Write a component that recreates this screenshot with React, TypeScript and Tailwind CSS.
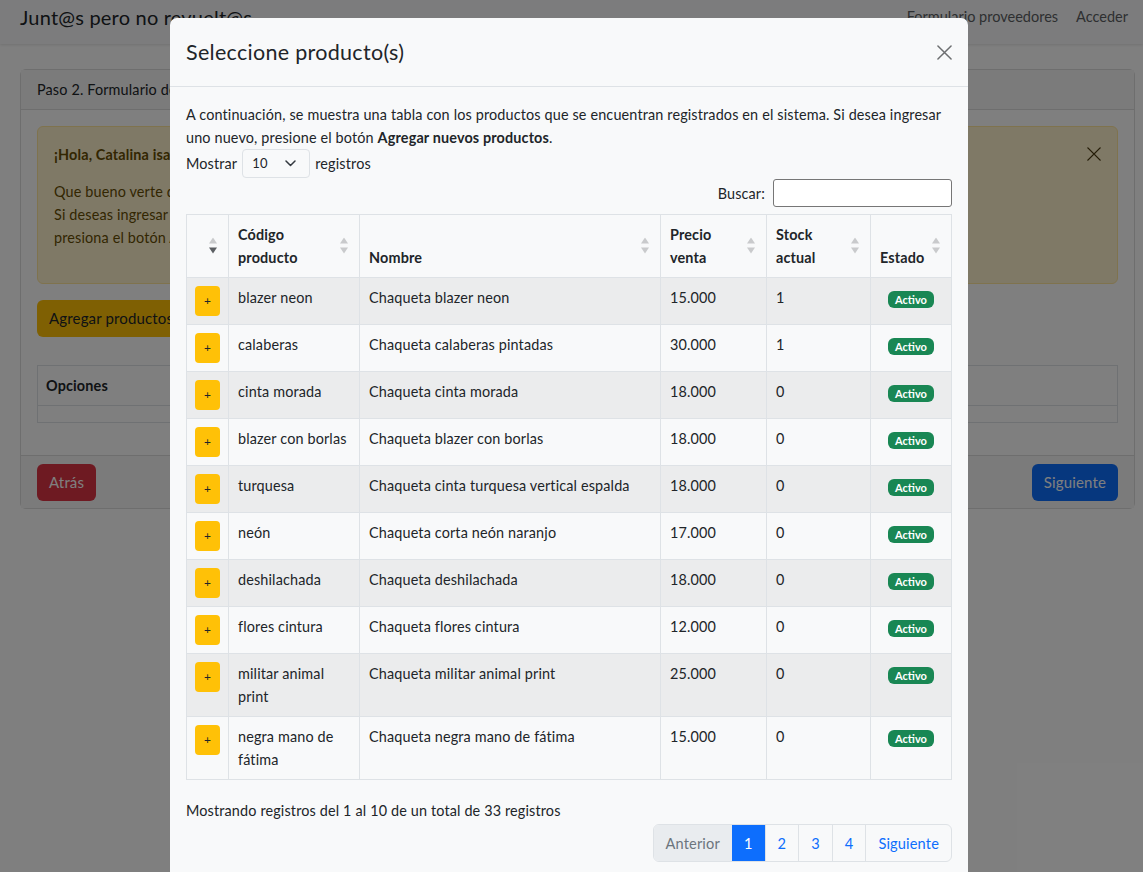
import React from 'react';

type Producto = {
  codigo: string[];
  nombre: string;
  precio: string;
  stock: string;
};

const productos: Producto[] = [
  { codigo: ['blazer neon'], nombre: 'Chaqueta blazer neon', precio: '15.000', stock: '1' },
  { codigo: ['calaberas'], nombre: 'Chaqueta calaberas pintadas', precio: '30.000', stock: '1' },
  { codigo: ['cinta morada'], nombre: 'Chaqueta cinta morada', precio: '18.000', stock: '0' },
  { codigo: ['blazer con borlas'], nombre: 'Chaqueta blazer con borlas', precio: '18.000', stock: '0' },
  { codigo: ['turquesa'], nombre: 'Chaqueta cinta turquesa vertical espalda', precio: '18.000', stock: '0' },
  { codigo: ['neón'], nombre: 'Chaqueta corta neón naranjo', precio: '17.000', stock: '0' },
  { codigo: ['deshilachada'], nombre: 'Chaqueta deshilachada', precio: '18.000', stock: '0' },
  { codigo: ['flores cintura'], nombre: 'Chaqueta flores cintura', precio: '12.000', stock: '0' },
  { codigo: ['militar animal', 'print'], nombre: 'Chaqueta militar animal print', precio: '25.000', stock: '0' },
  { codigo: ['negra mano de', 'fátima'], nombre: 'Chaqueta negra mano de fátima', precio: '15.000', stock: '0' },
];

const SortIcon = ({ active = false }: { active?: boolean }) => (
  <svg
    width="8"
    height="17"
    viewBox="0 0 8 17"
    className="absolute right-[11px] top-1/2 -translate-y-1/2"
  >
    <polygon points="4,0 8,6 0,6" fill="#c9cacc" />
    <polygon points="0,10 8,10 4,16" fill={active ? '#5c5f63' : '#c9cacc'} />
  </svg>
);

const CloseIcon = ({ size = 15, color = '#6c6e70' }: { size?: number; color?: string }) => (
  <svg width={size} height={size} viewBox="0 0 16 16">
    <path d="M1 1 L15 15 M15 1 L1 15" stroke={color} strokeWidth="1.6" strokeLinecap="round" />
  </svg>
);

const Navbar = () => (
  <div className="flex h-[44px] items-start justify-between bg-[#f8f9fa] pl-5 pr-[15px] pt-[4px] shadow-[0_1px_3px_rgba(0,0,0,0.12)]">
    <div className="text-[20px] leading-[26px] tracking-[0.2px] text-[#212529]">Junt@s pero no revuelt@s</div>
    <div className="flex gap-[18px] pt-[2px] text-[14.5px] leading-[22px] text-[#5c5f63]">
      <span>Formulario proveedores</span>
      <span>Acceder</span>
    </div>
  </div>
);

const FormCard = () => (
  <div className="ml-5 mt-[25px] w-[1115px] rounded-[6px] border border-[#dcdcdc] text-[14.4px] tracking-[0.15px]">
    <div className="flex h-[40px] items-center border-b border-[#dcdcdc] bg-[#f7f7f7] px-4">
      Paso 2. Formulario de registro de productos
    </div>
    <div className="p-4">
      <div className="relative rounded-[6px] border border-[#ffe69c] bg-[#fff3cd] px-4 pb-[18px] pt-4 leading-[23px] text-[#664d03]">
        <div className="mb-[14px] font-bold">¡Hola, Catalina isabel!</div>
        <div className="pb-4">
          <div>Que bueno verte de nuevo por aquí.</div>
          <div>
            Si deseas ingresar productos para la venta, revisa que no se encuentren en la tabla y, si es un nuevo producto,
          </div>
          <div>presiona el botón Agregar productos.</div>
        </div>
        <div className="absolute right-[16px] top-[20px]">
          <CloseIcon size={14} color="#4a3a10" />
        </div>
      </div>
      <button className="mt-4 flex h-[37px] items-center rounded-[6px] bg-[#ffc107] px-3 text-[15px] text-[#212529]">
        Agregar productos
      </button>
      <table className="mt-[28px] w-full border-collapse">
        <thead>
          <tr>
            <th className="h-[40px] border border-[#dee2e6] px-2 text-left font-bold">Opciones</th>
          </tr>
        </thead>
        <tbody>
          <tr>
            <td className="h-[17px] border border-[#dee2e6]"></td>
          </tr>
        </tbody>
      </table>
    </div>
    <div className="mt-4 flex h-[53px] items-center justify-between border-t border-[#dcdcdc] bg-[#f7f7f7] px-4">
      <button className="h-[37px] rounded-[6px] bg-[#dc3545] px-3 text-[15px] text-white">Atrás</button>
      <button className="h-[37px] rounded-[6px] bg-[#0d6efd] px-3 text-[15px] text-white">Siguiente</button>
    </div>
  </div>
);

const thBase =
  'relative border border-[#dee2e6] px-[9px] pb-2 pt-2 pr-[26px] text-left align-bottom font-bold leading-[23px]';
const tdBase = 'border border-[#dee2e6] px-[9px] py-2 align-top leading-[23px]';

const ProductTable = () => (
  <table className="mt-[7px] w-[765px] table-fixed border-collapse text-[#212529]">
    <colgroup>
      <col className="w-[42px]" />
      <col className="w-[131px]" />
      <col className="w-[301px]" />
      <col className="w-[106px]" />
      <col className="w-[104px]" />
      <col className="w-[81px]" />
    </colgroup>
    <thead>
      <tr className="bg-[#f8f9fa]">
        <th className={thBase}>
          <SortIcon active />
        </th>
        <th className={thBase}>
          <div>Código</div>
          <div>producto</div>
          <SortIcon />
        </th>
        <th className={thBase}>
          Nombre
          <SortIcon />
        </th>
        <th className={thBase}>
          <div>Precio</div>
          <div>venta</div>
          <SortIcon />
        </th>
        <th className={thBase}>
          <div>Stock</div>
          <div>actual</div>
          <SortIcon />
        </th>
        <th className={thBase}>
          Estado
          <SortIcon />
        </th>
      </tr>
    </thead>
    <tbody>
      {productos.map((p, i) => (
        <tr key={p.nombre} className={i % 2 === 0 ? 'bg-[#ebeced]' : 'bg-[#f8f9fa]'}>
          <td className="border border-[#dee2e6] px-2 py-2 align-top">
            <button className="flex h-[30px] w-[25px] items-center justify-center rounded-[4px] bg-[#ffc107] text-[12px] leading-none text-[#212529]">
              +
            </button>
          </td>
          <td className={`${tdBase} whitespace-nowrap`}>
            {p.codigo.map((line) => (
              <div key={line}>{line}</div>
            ))}
          </td>
          <td className={tdBase}>{p.nombre}</td>
          <td className={tdBase}>{p.precio}</td>
          <td className={tdBase}>{p.stock}</td>
          <td className={`${tdBase} text-center`}>
            <span className="inline-block rounded-[6px] bg-[#198754] px-[7px] py-[3px] align-middle text-[11px] font-bold leading-[11px] tracking-normal text-white">
              Activo
            </span>
          </td>
        </tr>
      ))}
    </tbody>
  </table>
);

const Pagination = () => {
  const pages = ['1', '2', '3', '4'];
  return (
    <div className="mt-[2px] flex justify-end">
      <div className="flex h-[38px] overflow-hidden rounded-[6px] border border-[#dee2e6] text-[14.6px]">
        <span className="flex items-center bg-[#e9ecef] px-3 text-[#6c757d]">Anterior</span>
        {pages.map((n) => (
          <span
            key={n}
            className={
              n === '1'
                ? 'flex items-center bg-[#0d6efd] px-3 text-white'
                : 'flex items-center border-l border-[#dee2e6] px-3 text-[#0d6efd]'
            }
          >
            {n}
          </span>
        ))}
        <span className="flex items-center border-l border-[#dee2e6] px-3 text-[#0d6efd]">Siguiente</span>
      </div>
    </div>
  );
};

const ProductModal = () => (
  <div className="absolute left-[170px] top-[18px] w-[798px] rounded-[7px] bg-[#f8f9fa] text-[#212529]">
    <div className="flex h-[69px] items-center justify-between border-b border-[#dee2e6] pl-4 pr-[16px]">
      <h5 className="text-[21.5px] leading-[30px] tracking-[0.3px]">Seleccione producto(s)</h5>
      <CloseIcon />
    </div>
    <div className="px-4 pb-4 pt-4 text-[14.4px] leading-[23px] tracking-[0.15px]">
      <p>
        A continuación, se muestra una tabla con los productos que se encuentran registrados en el sistema. Si desea
        ingresar uno nuevo, presione el botón <span className="font-bold">Agregar nuevos productos</span>.
      </p>
      <div className="flex h-[29px] items-center gap-[5px]">
        <span>Mostrar</span>
        <div className="flex h-[29px] w-[68px] items-center justify-between rounded-[4px] border border-[#dee2e6] bg-[#f8f9fa] pl-[9px] pr-[13px] text-[13px]">
          <span>10</span>
          <svg width="11" height="7" viewBox="0 0 11 7">
            <path d="M1 1 L5.5 5.5 L10 1" stroke="#343a40" strokeWidth="1.5" fill="none" strokeLinecap="round" strokeLinejoin="round" />
          </svg>
        </div>
        <span>registros</span>
      </div>
      <div className="mt-px flex h-[28px] items-center justify-end gap-2">
        <span>Buscar:</span>
        <div className="h-[28px] w-[179px] rounded-[3px] border border-[#767676] bg-white"></div>
      </div>
      <ProductTable />
      <div className="mt-[19px]">Mostrando registros del 1 al 10 de un total de 33 registros</div>
      <Pagination />
    </div>
  </div>
);

export default function App() {
  return (
    <div className="relative h-[872px] w-full overflow-hidden bg-white font-['Lato','Noto_Sans',sans-serif] text-[#212529]">
      <Navbar />
      <FormCard />
      <div className="absolute inset-0 bg-black/50" />
      <ProductModal />
    </div>
  );
}
